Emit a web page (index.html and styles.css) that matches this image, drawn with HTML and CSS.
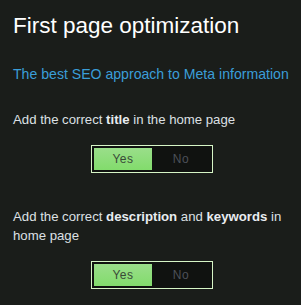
FILE: index.html
```html
<!DOCTYPE html>
<html>
<head>
<meta charset="utf-8">
<link rel="stylesheet" href="styles.css">
</head>
<body>
<div class="panel">
  <h1 class="title">First page optimization</h1>
  <p class="subtitle">The best SEO approach to Meta information</p>
  <div class="question">
    <p class="q-text">Add the correct <b>title</b> in the home page</p>
    <div class="toggle">
      <span class="seg seg-on">Yes</span>
      <span class="seg seg-off">No</span>
    </div>
  </div>
  <div class="question">
    <p class="q-text">Add the correct <b>description</b> and <b>keywords</b> in home page</p>
    <div class="toggle">
      <span class="seg seg-on">Yes</span>
      <span class="seg seg-off">No</span>
    </div>
  </div>
</div>
</body>
</html>
```
FILE: styles.css
```css
html, body {
  margin: 0;
  padding: 0;
  background: #1a1d1a;
}
.panel {
  width: 301px;
  height: 305px;
  box-sizing: border-box;
  padding: 12px 10px 0 13px;
  font-family: "Liberation Sans", Arial, sans-serif;
  color: #dde0e4;
}
.title {
  margin: 0;
  font-size: 22.5px;
  font-weight: normal;
  line-height: 28px;
  color: #ffffff;
}
.subtitle {
  margin: 25px 0 0 0;
  font-size: 14.1px;
  line-height: 18px;
  color: #3a9ed8;
}
.question {
  margin-top: 27px;
}
.question + .question {
  margin-top: 34px;
}
.q-text {
  margin: 0;
  font-size: 13.2px;
  line-height: 19px;
}
.q-text b {
  color: #e8ecf0;
}
.toggle {
  display: flex;
  width: 116px;
  margin: 16px 0 0 78px;
  padding: 2px;
  border: 1px solid #d6f5c6;
  background: #101210;
}
.seg {
  width: 58px;
  height: 22px;
  display: flex;
  align-items: center;
  justify-content: center;
  font-size: 12px;
  letter-spacing: 0.5px;
}
.seg-on {
  background: linear-gradient(#9ade8a, #82dc6c);
  color: #3a4a38;
}
.seg-off {
  color: #4c5058;
}
```
